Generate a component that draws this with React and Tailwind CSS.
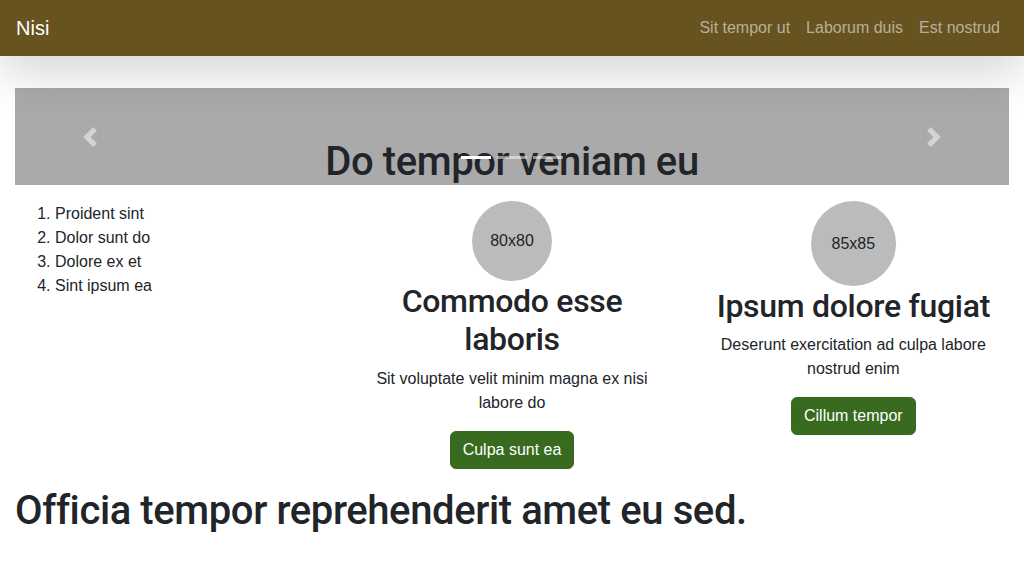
import React from "react";

const Chevron = ({ dir }) => (
  <svg width="20" height="20" viewBox="0 0 8 8" fill="#fff" className="opacity-50">
    {dir === "prev" ? (
      <path d="M5.25 0l-4 4 4 4 1.5-1.5L4.25 4l2.5-2.5L5.25 0z" />
    ) : (
      <path d="M2.75 0l-1.5 1.5L3.75 4l-2.5 2.5L2.75 8l4-4-4-4z" />
    )}
  </svg>
);

const Feature = ({ size, label, title, text, cta }) => (
  <div className="w-1/3 px-[15px] text-center">
    <div
      className={
        size === 80
          ? "w-20 h-20 mx-auto rounded-full bg-[#bbb] flex items-center justify-center"
          : "w-[85px] h-[85px] mx-auto rounded-full bg-[#bbb] flex items-center justify-center"
      }
    >
      <span className="text-base">{label}</span>
    </div>
    <h2 className="mt-px mb-2 text-[32px] leading-[38.4px] font-medium tracking-[-0.3px] font-['Roboto',sans-serif]">
      {title}
    </h2>
    <p className="mb-4 text-base leading-6">{text}</p>
    <button className="bg-[#386a1f] border border-[#386a1f] text-white text-base leading-6 px-3 py-1.5 rounded-md">
      {cta}
    </button>
  </div>
);

const App = () => {
  return (
    <div className="min-h-[572px] bg-white text-[#212529] font-['Liberation_Sans',Arial,sans-serif]">
      <nav className="h-14 bg-[#66531f] px-4 flex items-center justify-between shadow-[0_1rem_3rem_rgba(0,0,0,0.175)] relative z-10">
        <span className="text-xl text-white">Nisi</span>
        <div className="flex text-base text-[rgba(255,255,255,0.55)]">
          <span className="px-2">Sit tempor ut</span>
          <span className="px-2">Laborum duis</span>
          <span className="px-2">Est nostrud</span>
        </div>
      </nav>

      <main className="px-[15px]">
        {/* carousel */}
        <div className="relative mt-8 h-[97px] bg-[#aaa]">
          <h1 className="absolute left-0 right-0 top-[50px] text-center text-[40px] leading-[48px] font-medium tracking-[-0.4px] font-['Roboto',sans-serif]">
            Do tempor veniam eu
          </h1>
          <div className="absolute left-0 right-0 bottom-[26px] flex justify-center">
            <span className="w-[30px] h-[3px] mx-[3px] bg-white" />
            <span className="w-[30px] h-[3px] mx-[3px] bg-white opacity-50" />
            <span className="w-[30px] h-[3px] mx-[3px] bg-white opacity-50" />
          </div>
          <div className="absolute left-0 top-0 bottom-0 w-[15%] flex items-center justify-center">
            <Chevron dir="prev" />
          </div>
          <div className="absolute right-0 top-0 bottom-0 w-[15%] flex items-center justify-center">
            <Chevron dir="next" />
          </div>
        </div>

        <div className="flex -mx-[15px] mt-4">
          <div className="w-1/3 px-[15px]">
            <ol className="list-decimal pl-10 mb-4 pt-px text-base leading-6">
              <li>Proident sint</li>
              <li>Dolor sunt do</li>
              <li>Dolore ex et</li>
              <li>Sint ipsum ea</li>
            </ol>
          </div>
          <Feature
            size={80}
            label="80x80"
            title="Commodo esse laboris"
            text="Sit voluptate velit minim magna ex nisi labore do"
            cta="Culpa sunt ea"
          />
          <Feature
            size={85}
            label="85x85"
            title="Ipsum dolore fugiat"
            text="Deserunt exercitation ad culpa labore nostrud enim"
            cta="Cillum tempor"
          />
        </div>

        <h1 className="mt-[18px] text-[40px] leading-[48px] font-medium tracking-[-0.4px] font-['Roboto',sans-serif]">
          Officia tempor reprehenderit amet eu sed.
        </h1>
      </main>
    </div>
  );
};

export default App;
